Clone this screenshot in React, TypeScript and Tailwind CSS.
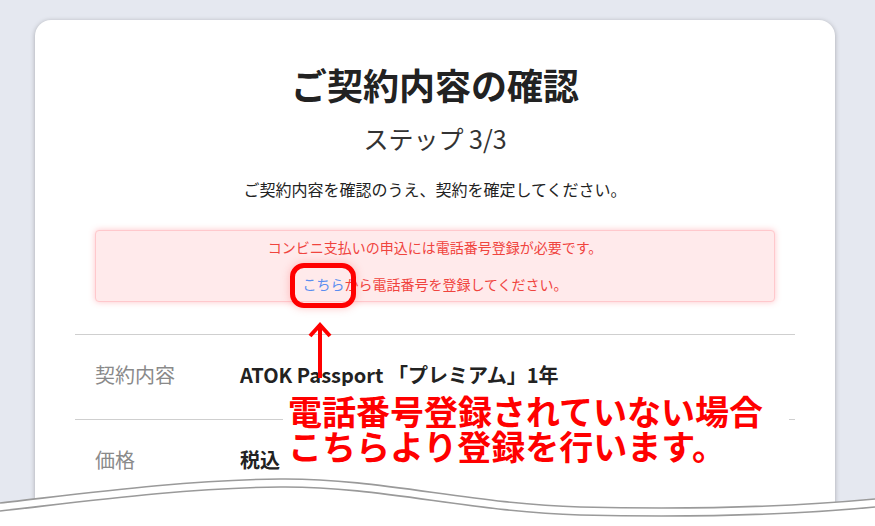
import React from "react";

const jp = { fontFamily: '"Noto Sans CJK JP", "Noto Sans", sans-serif' };

function Row({ label, value }: { label: string; value: string }) {
  return (
    <div className="flex border-t border-[#cfcfcf] px-5 pt-[25px] pb-[29px] leading-[30px]">
      <div className="w-[145px] shrink-0 text-[20px] text-[#8a8a8a]">{label}</div>
      <div className="text-[20px] font-bold text-[#222]">{value}</div>
    </div>
  );
}

export default function App() {
  return (
    <div className="relative h-[526px] w-[875px] overflow-hidden bg-[#e5e8f0]" style={jp}>
      <div className="ml-[35px] mt-[20px] w-[800px] rounded-2xl bg-white px-10 pt-10 pb-40 shadow-[0_1px_5px_rgba(0,0,0,0.28)]">
        <h1 className="text-center text-[36px] font-bold leading-[48px] text-[#222]">
          ご契約内容の確認
        </h1>
        <p className="mt-[14px] text-center text-[25px] leading-[32px] text-[#333]">
          ステップ 3/3
        </p>
        <p className="mt-[23px] text-center text-[16px] leading-[24px] text-[#222]">
          ご契約内容を確認のうえ、契約を確定してください。
        </p>

        <div className="mx-5 mt-[29px] rounded border border-[#ffc8cc] bg-[#ffeaeb] pt-[6px] pb-[7px] text-center text-[14px] leading-[20px] text-[#f0443e] shadow-[0_0_6px_rgba(255,90,100,0.35)]">
          <p>コンビニ支払いの申込には電話番号登録が必要です。</p>
          <p className="mt-[17px]">
            <span className="text-[#5b8ef0]">こちら</span>から電話番号を登録してください。
          </p>
        </div>

        <div className="mt-[32px]">
          <Row label="契約内容" value="ATOK Passport 「プレミアム」1年" />
          <Row label="価格" value="税込" />
        </div>
      </div>

      {/* highlight around link */}
      <div className="absolute left-[290px] top-[263px] h-[45px] w-[66px] rounded-[14px] border-[5px] border-[#ff0000] shadow-[0_0_8px_rgba(255,120,120,0.45)]" />

      {/* arrow */}
      <svg className="absolute left-[308px] top-[320px]" width="24" height="60" viewBox="0 0 24 60">
        <line x1="12" y1="4" x2="12" y2="58" stroke="#ff0000" strokeWidth="4" />
        <polyline points="2,16 12,5 22,16" fill="none" stroke="#ff0000" strokeWidth="4" />
      </svg>

      {/* annotation */}
      <div className="absolute left-[283px] top-[386px] w-[506px] bg-white pl-[5px] pt-[7px] pb-[4px] text-[34px] font-bold leading-[35px] text-[#ff0000]">
        <p>電話番号登録されていない場合</p>
        <p>こちらより登録を行います。</p>
      </div>

      {/* torn edge */}
      <svg className="absolute left-0 top-[470px]" width="875" height="56" viewBox="0 0 875 56">
        <path
          d="M0,33 C80,24 180,10 280,9 C380,8 470,34 580,37 C700,40 800,36 875,29 L875,56 L0,56 Z"
          fill="#ffffff"
        />
        <path
          d="M0,33 C80,24 180,10 280,9 C380,8 470,34 580,37 C700,40 800,36 875,29"
          fill="none"
          stroke="#9a9a9a"
          strokeWidth="1.6"
        />
        <path
          d="M0,41 C80,32 180,18 280,17 C380,16 470,42 580,45 C700,48 800,44 875,37"
          fill="none"
          stroke="#9a9a9a"
          strokeWidth="1.6"
        />
      </svg>
    </div>
  );
}
